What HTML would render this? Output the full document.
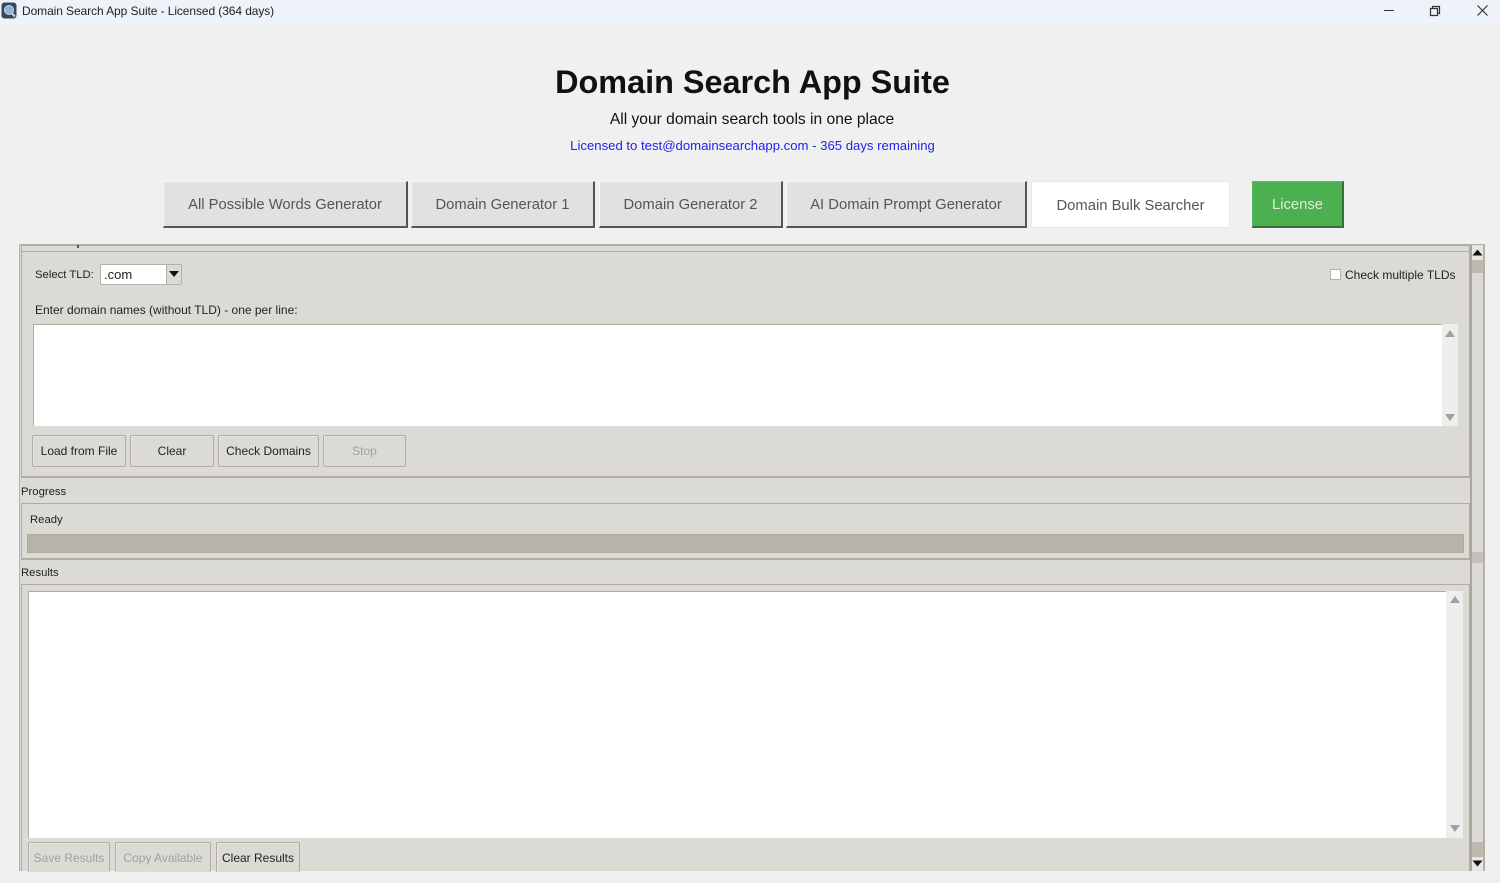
<!DOCTYPE html>
<html><head><meta charset="utf-8"><style>
html,body{margin:0;padding:0;width:1500px;height:883px;overflow:hidden;background:#f0f0f0;font-family:"Liberation Sans",sans-serif}
body{filter:blur(.3px)}
div,span{position:absolute;box-sizing:border-box}
.t{white-space:nowrap;font-size:12px;color:#222;line-height:16px}
.n{font-size:11.3px}
.tab{top:181px;height:47px;background:#e1e1e1;border-right:2px solid #555;border-bottom:2px solid #555;border-top:1px solid #f5f5f5;border-left:1px solid #f5f5f5;color:#555;font-size:14.8px;line-height:47px;text-align:center;white-space:nowrap}
.btn{height:32px;background:#dcdad5;border:1px solid #b0aca4;border-radius:2px;box-shadow:inset 1px 1px 0 #e8e6e2;font-size:12px;line-height:31px;text-align:center;color:#222;white-space:nowrap}
.dis{color:#a3a19c}
.sb{background:#eeeeec}
</style></head><body>
<div style="left:0;top:0;width:1500px;height:24px;background:#eef3f9"></div>
<svg style="position:absolute;left:1px;top:2px" width="16" height="17" viewBox="0 0 16 17"><rect x="0.5" y="0.5" width="15" height="16" rx="3" fill="#34495e"/><circle cx="8" cy="8" r="4.5" fill="#8fb4d6" stroke="#c9d8e6"/><path d="M11 11.5l3 3" stroke="#c9d8e6" stroke-width="2"/></svg>
<div class="t" style="left:22px;top:3px;font-size:12px;letter-spacing:-.09px;color:#222">Domain Search App Suite - Licensed (364 days)</div>
<svg style="position:absolute;left:1380px;top:4px" width="112" height="14" viewBox="0 0 112 14"><path d="M4 6.5h10" stroke="#333" fill="none"/><path d="M50.500 4.500h7v7h-7zM52.500 4.500v-2h7v7h-2" stroke="#333" fill="none" stroke-width="1.200"/><path d="M97.500 1.500l10 10M107.500 1.500l-10 10" stroke="#333" fill="none" stroke-width="1.200"/></svg>

<div style="left:0;width:1500px;top:63px;text-align:center;font-size:32.4px;font-weight:bold;color:#111;line-height:38px"><span style="position:static;margin-left:5px">Domain Search App Suite</span></div>
<div style="left:0;width:1500px;top:110px;text-align:center;font-size:15.6px;color:#111;line-height:20px"><span style="position:static;margin-left:4px">All your domain search tools in one place</span></div>
<div style="left:0;width:1500px;top:137px;text-align:center;font-size:13.15px;color:#2222ee;line-height:17px"><span style="position:static;margin-left:5px">Licensed to test@domainsearchapp.com - 365 days remaining</span></div>

<div class="tab" style="left:163px;width:245px">All Possible Words Generator</div>
<div class="tab" style="left:411px;width:184px">Domain Generator 1</div>
<div class="tab" style="left:599px;width:184px">Domain Generator 2</div>
<div class="tab" style="left:786px;width:241px">AI Domain Prompt Generator</div>
<div class="tab" style="left:1031px;width:199px;background:#fff;border:1px solid #e8e8e8;line-height:48px">Domain Bulk Searcher</div>
<div class="tab" style="left:1252px;width:92px;background:#4caf50;color:#d8efd9;border-color:#5cbb60 #3c6b3e #3c6b3e #5cbb60">License</div>

<div style="left:19px;top:244px;width:1466px;height:627px;background:#dcdad5;border:1px solid #b5b1a8;border-bottom:0"></div>
<div style="left:21px;top:245px;width:1449px;height:233px;border:1px solid #b0aca4;border-bottom-width:2px"></div>
<div style="left:22px;top:251px;width:1447px;height:1px;background:#b0aca4"></div>
<div style="left:77px;top:245px;width:2px;height:3px;background:#555"></div>

<div class="t n" style="left:35px;top:267px">Select TLD:</div>
<div style="left:100px;top:264px;width:82px;height:21px;background:#fff;border:1px solid #b5b1a8;border-radius:2px"></div>
<div class="t" style="left:104px;top:267px;font-size:13px">.com</div>
<div style="left:166px;top:265px;width:15px;height:19px;background:#dcdad5;border-left:1px solid #b5b1a8"></div>
<svg style="position:absolute;left:169px;top:271px" width="10" height="6"><path d="M0 0h10l-5 6z" fill="#111"/></svg>
<div style="left:1330px;top:269px;width:11px;height:11px;background:#fff;border:1px solid #b5b1a8"></div>
<div class="t" style="left:1345px;top:267px">Check multiple TLDs</div>
<div class="t" style="left:35px;top:302px">Enter domain names (without TLD) - one per line:</div>

<div style="left:33px;top:324px;width:1409px;height:102px;background:#fff;border-top:1px solid #b0aca4;border-left:1px solid #b0aca4"></div>
<div class="sb" style="left:1442px;top:324px;width:16px;height:102px"></div>
<svg style="position:absolute;left:1445px;top:329px" width="10" height="93"><path d="M0 8l5-7 5 7zM0 85h10l-5 7z" fill="#a0a0a0"/></svg>

<div class="btn" style="left:32px;top:435px;width:94px">Load from File</div>
<div class="btn" style="left:130px;top:435px;width:84px">Clear</div>
<div class="btn" style="left:218px;top:435px;width:101px">Check Domains</div>
<div class="btn dis" style="left:323px;top:435px;width:83px">Stop</div>

<div class="t n" style="left:21px;top:484px">Progress</div>
<div style="left:21px;top:503px;width:1449px;height:57px;border:1px solid #b0aca4;border-bottom-width:2px"></div>
<div class="t n" style="left:30px;top:512px">Ready</div>
<div style="left:27px;top:534px;width:1437px;height:19px;background:#b9b4a9;border:1px solid #aeaa9f"></div>
<div class="t n" style="left:21px;top:565px">Results</div>
<div style="left:21px;top:584px;width:1449px;height:287px;border:1px solid #b0aca4;border-bottom:0"></div>
<div style="left:28px;top:591px;width:1418px;height:247px;background:#fff;border-top:1px solid #b0aca4;border-left:1px solid #b0aca4"></div>
<div class="sb" style="left:1446px;top:591px;width:17px;height:247px"></div>
<svg style="position:absolute;left:1450px;top:595px" width="10" height="239"><path d="M0 8l5-7 5 7zM0 230h10l-5 7z" fill="#a0a0a0"/></svg>

<div class="btn dis n" style="left:28px;top:842px;width:82px;height:30px;border-bottom:0">Save Results</div>
<div class="btn dis" style="left:115px;top:842px;width:96px;height:30px;border-bottom:0">Copy Available</div>
<div class="btn n" style="left:216px;top:842px;width:84px;height:30px;border-bottom:0">Clear Results</div>

<div style="left:1470px;top:245px;width:2px;height:626px;background:#aaa69d"></div>
<div style="left:1483px;top:245px;width:2px;height:626px;background:#b5b1a8"></div>
<div style="left:1472px;top:246px;width:11px;height:14px;background:#e8e6e2"></div>
<svg style="position:absolute;left:1472px;top:249px" width="11" height="7"><path d="M0.500 6.500l5-6 5 6z" fill="#111"/></svg>
<div style="left:1472px;top:260px;width:11px;height:13px;background:#bdb9ae"></div>
<div style="left:1472px;top:552px;width:11px;height:11px;background:#c4c1b8"></div>
<div style="left:1472px;top:842px;width:11px;height:15px;background:#bdb9ae"></div>
<div style="left:1472px;top:857px;width:11px;height:14px;background:#e8e6e2"></div>
<svg style="position:absolute;left:1472px;top:860px" width="11" height="7"><path d="M0.500 0.500h10l-5 6z" fill="#111"/></svg>
</body></html>
